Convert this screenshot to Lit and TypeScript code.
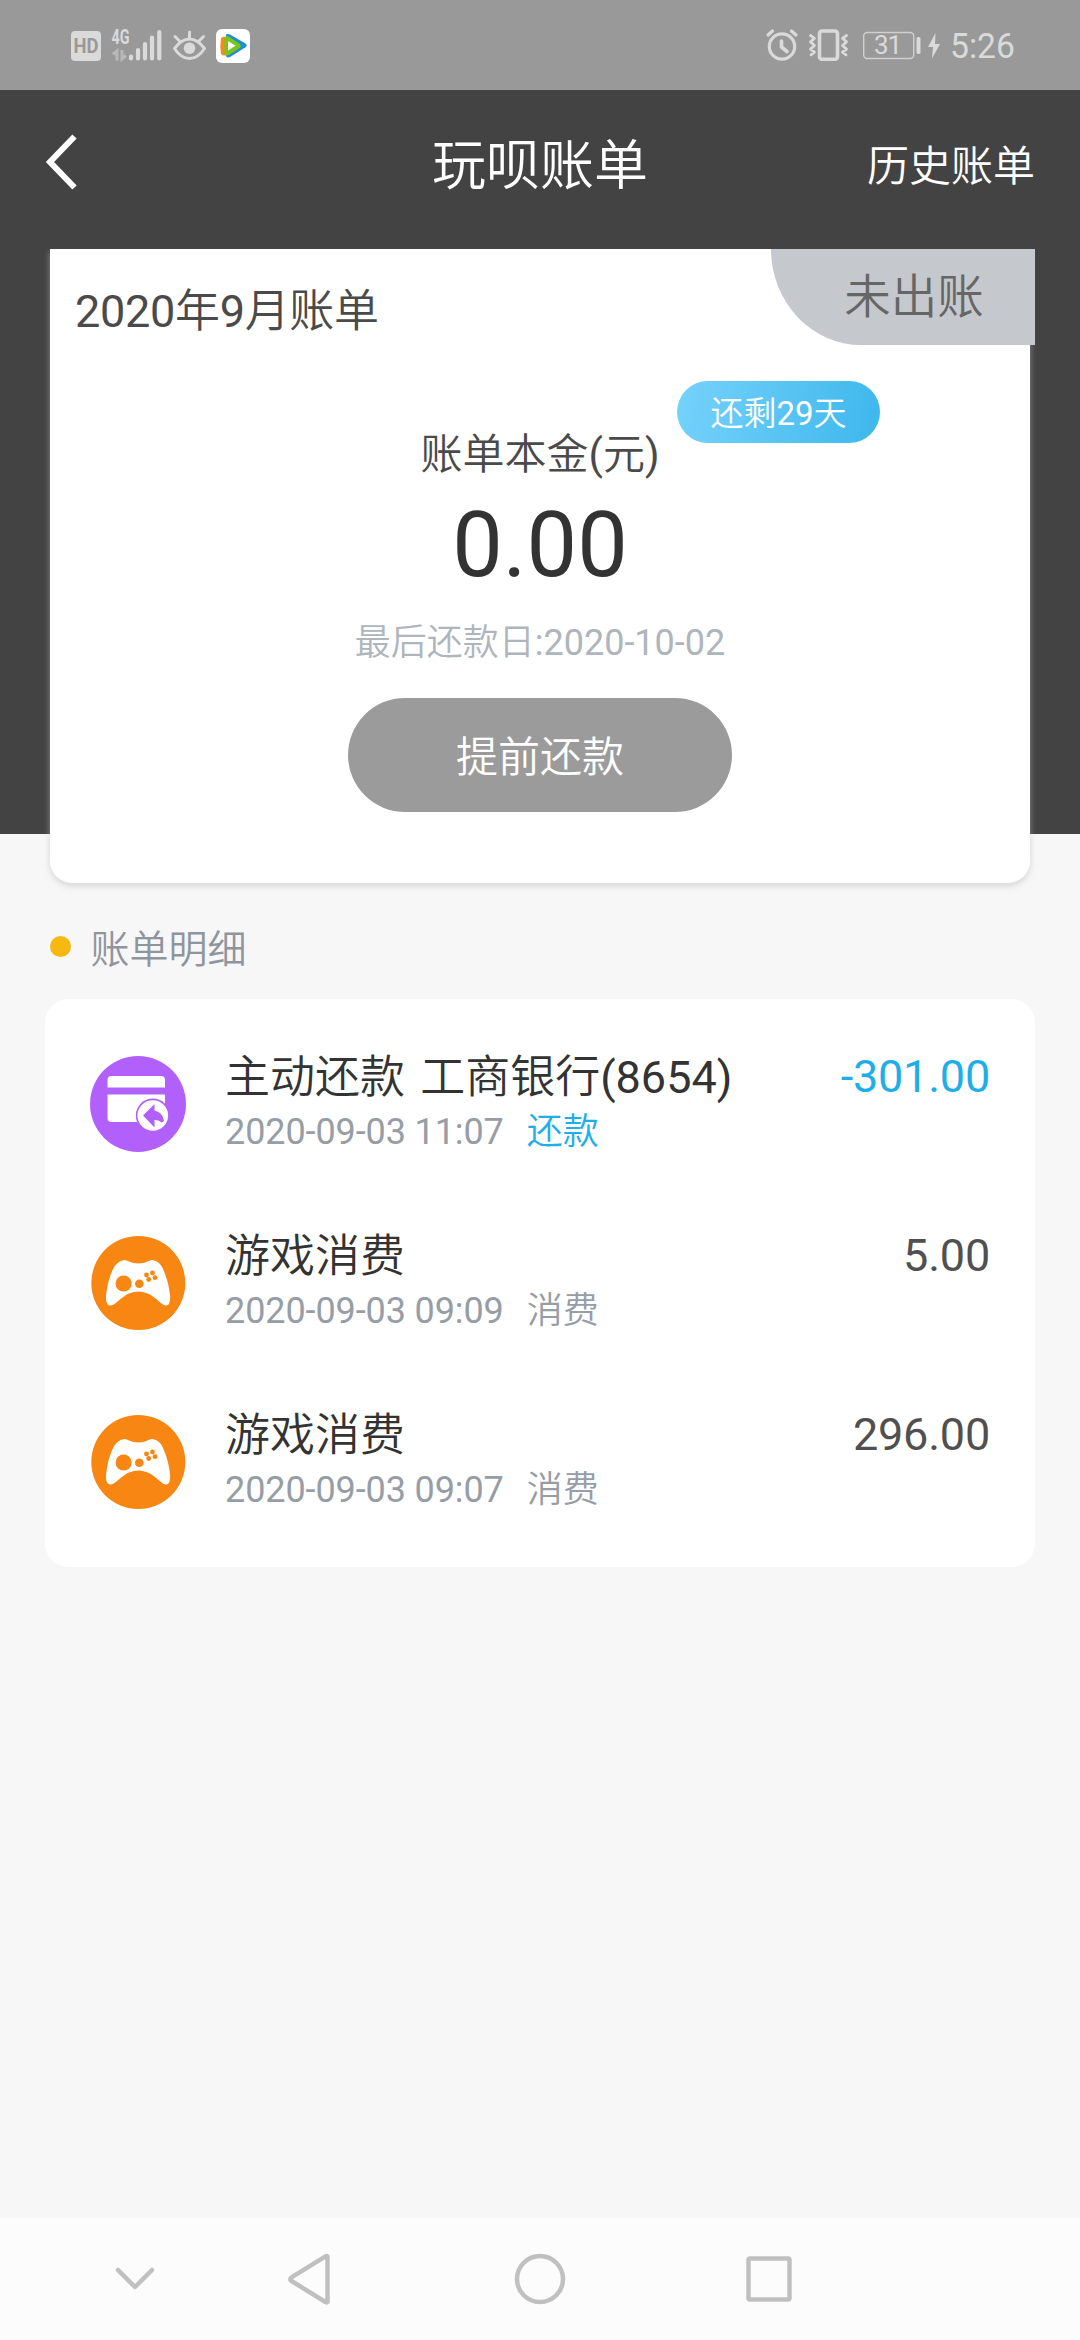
import { LitElement, html, css, svg } from "lit";
import { customElement, property } from "lit/decorators.js";
import { classMap } from "lit/directives/class-map.js";

interface Entry {
  kind: "repay" | "game";
  title: string;
  time: string;
  tag: string;
  amount: string;
}

const ENTRIES: Entry[] = [
  { kind: "repay", title: "主动还款 工商银行(8654)", time: "2020-09-03 11:07", tag: "还款", amount: "-301.00" },
  { kind: "game", title: "游戏消费", time: "2020-09-03 09:09", tag: "消费", amount: "5.00" },
  { kind: "game", title: "游戏消费", time: "2020-09-03 09:07", tag: "消费", amount: "296.00" },
];

@customElement("status-bar")
class StatusBar extends LitElement {
  static styles = css`
    :host {
      display: flex;
      justify-content: space-between;
      height: 90px;
      background: #999999;
    }
    svg {
      display: block;
    }
    .label {
      font-family: Roboto, "Liberation Sans", sans-serif;
      fill: #dadada;
    }
    .hd {
      font-family: Roboto, "Liberation Sans", sans-serif;
      font-weight: 700;
      fill: #999999;
    }
  `;

  render() {
    return html`
      <svg width="300" height="90" viewBox="0 0 300 90">
        <rect x="71" y="31" width="30" height="30" rx="4" fill="#dadada" />
        <text class="hd" x="86" y="53" font-size="20" text-anchor="middle" textLength="25" lengthAdjust="spacingAndGlyphs">HD</text>
        <text class="label" x="111.5" y="43.5" font-size="19.5" font-weight="700" textLength="18" lengthAdjust="spacingAndGlyphs">4G</text>
        <g fill="none" stroke="#b9b9b9" stroke-width="3">
          <path d="M113 54.5l4-3.5v9.5" />
          <path d="M122 50v9l4-3.5" />
        </g>
        <g stroke="#dadada" stroke-width="4.2" stroke-linecap="round">
          <path d="M131 56.5v2M138 50v8.5M145 44v14.5M152 37.5v21M159.3 32v26.5" />
        </g>
        <g fill="none" stroke="#dadada" stroke-width="3" stroke-linecap="round" stroke-linejoin="round">
          <path d="M174.5 48.5q7-9.5 15-9.5t15 9.5q-6.5 10-15 10t-15-10z" />
          <path d="M189.5 32v6M175 36.5l4.5 4.5M203.5 36.5l-4.5 4.5" />
        </g>
        <circle cx="189.500" cy="48.200" r="5.800" fill="#dadada" />
        <rect x="216" y="29" width="34" height="34" rx="6" fill="#fff" />
        <path d="M226 34.500q1.500-1 4 0l15.500 9q2.500 1.800 0 3.800l-15 9.500q-4 2-4.500-1z" fill="#1b8fd6" />
        <path d="M221 38q2.500-2 6-1v18q-3.500 1.500-6-1q-1.500-8 0-16z" fill="#f58a1f" />
        <path d="M224.500 38q1-2.500 4-1.500l11.500 7.500q1.800 2 0 3.800l-11.500 7.500q-3.500 1-4-2z" fill="#7ac51c" />
        <path d="M228 41l7.500 4.800-7.500 4.800z" fill="#fff" />
      </svg>
      <svg width="340" height="90" viewBox="740 0 340 90">
        <g fill="none" stroke="#dadada" stroke-width="3.2" stroke-linecap="round" stroke-linejoin="round">
          <circle cx="782" cy="46.5" r="12.7" />
          <path d="M781.5 41v6l5.5 4.5" stroke-width="3.6" />
          <path d="M768 35l4.500-4M796 35l-4.500-4" />
          <rect x="819.5" y="31" width="18" height="28.2" rx="2.5" stroke-width="3.6" />
          <path d="M810.5 35.500l4 2.800-4 3.600 4 3.600-4 3.600 4 3-3.500 2.700M846.500 35.500l-4 2.800 4 3.600-4 3.600 4 3.600-4 3 3.500 2.700" stroke-width="2.800" />
        </g>
        <rect x="863.700" y="32.500" width="50" height="26" rx="3.500" fill="none" stroke="#d0d0d0" stroke-width="1.400" />
        <text class="label" x="888" y="54" font-size="26" text-anchor="middle" textLength="28">31</text>
        <rect x="916.500" y="37" width="4" height="17" rx="1.800" fill="#dadada" />
        <path d="M935.500 33l-7.500 14h5l-1 11.500 8-14.500h-5z" fill="#dadada" />
        <text class="label" x="950" y="58" font-size="35.5" textLength="65" lengthAdjust="spacingAndGlyphs">5:26</text>
      </svg>
    `;
  }
}

@customElement("bill-summary")
class BillSummary extends LitElement {
  static styles = css`
    :host {
      display: block;
      padding: 0 50px;
      background: linear-gradient(#434343 585px, transparent 585px);
    }
    .card {
      position: relative;
      display: flex;
      flex-direction: column;
      align-items: center;
      box-sizing: border-box;
      height: 634px;
      padding-top: 33px;
      background: #fff;
      border-radius: 0 0 22px 22px;
      box-shadow: 0 3px 6px rgba(190, 190, 190, 0.6);
      clip-path: inset(0 -8px -20px -8px);
    }
    .month {
      align-self: flex-start;
      padding-left: 25px;
      font-size: 45px;
      line-height: 60px;
      letter-spacing: -0.3px;
      color: #4a4a4a;
    }
    .ribbon {
      position: absolute;
      top: 0;
      right: -5px;
      box-sizing: border-box;
      width: 264px;
      height: 96px;
      padding-left: 22px;
      background: #c5c8cd;
      border-bottom-left-radius: 90px 96px;
      color: #666;
      font-size: 46.5px;
      line-height: 96px;
      text-align: center;
    }
    .remaining {
      position: absolute;
      top: 132px;
      left: 627px;
      width: 203px;
      height: 62px;
      border-radius: 31px;
      background: linear-gradient(100deg, #76d2fb, #3db7ec);
      color: #fff;
      font-size: 33px;
      line-height: 66px;
      text-align: center;
    }
    .caption {
      margin-top: 83px;
      font-size: 42px;
      line-height: 60px;
      color: #4a4a4a;
    }
    .total {
      margin-top: 11px;
      font-size: 90px;
      line-height: 100px;
      color: #333;
    }
    .due {
      margin-top: 23px;
      font-size: 36px;
      line-height: 48px;
      color: #afb5bd;
    }
    .pay {
      width: 384px;
      height: 114px;
      margin-top: 31px;
      padding: 0;
      border: 0;
      border-radius: 57px;
      background: #9b9b9b;
      color: #fff;
      font: inherit;
      font-size: 42px;
      line-height: 120px;
    }
  `;

  render() {
    return html`
      <section class="card">
        <div class="month">2020年9月账单</div>
        <div class="ribbon">未出账</div>
        <div class="remaining">还剩29天</div>
        <div class="caption">账单本金(元)</div>
        <div class="total">0.00</div>
        <div class="due">最后还款日:2020-10-02</div>
        <button class="pay">提前还款</button>
      </section>
    `;
  }
}

const repayIcon = svg`
  <circle cx="48" cy="48" r="48" fill="#b260fc" />
  <path d="M17.5 31.5v-7.5q0-4 4-4h49.500q4 0 4 4v7.500z" fill="#fff" />
  <path d="M17.5 38.5h57.5v23.500q0 4-4 4h-49.500q-4 0-4-4z" fill="#fff" />
  <circle cx="62.8" cy="59.5" r="17" fill="#b260fc" />
  <circle cx="62.8" cy="59.5" r="15.3" fill="#fff" />
  <path d="M53 59.5l11.5-11.5v6.500q8 1.500 9.500 10.500l-2.500 1.500q-2.500-3-7-2.500v7.500z" fill="#b260fc" />
`;

const gameIcon = svg`
  <circle cx="48.3" cy="48" r="47" fill="#f88613" />
  <path d="M34 25q2-.5 5 1.500q4 2 9.300 2t9.300-2q3-2 5-1.500q7 1.500 10 8q6 13 7.500 28q.5 9.500-4 9.500q-2.500 0-6.500-3.500q-8-7.500-12-8.500q-5-2-9.300-2t-9.300 2q-4 1.500-12 8.500q-4 3.500-7 3.500q-4.500-.5-4-9.500q1.500-16 7.500-28q3.500-6.500 10.500-8z" fill="#fff" />
  <g fill="#f88613">
    <circle cx="33.6" cy="48.5" r="8" />
    <circle cx="49.3" cy="48.7" r="4.3" />
    <circle cx="56.5" cy="40" r="2.4" />
    <circle cx="62.5" cy="38" r="2.4" />
    <circle cx="58.7" cy="44.5" r="2.4" />
    <circle cx="65" cy="42.7" r="2.4" />
  </g>
`;

@customElement("bill-entry")
class BillEntry extends LitElement {
  @property({ attribute: false }) entry!: Entry;

  static styles = css`
    :host {
      display: flex;
      align-items: flex-start;
      box-sizing: border-box;
      height: 179px;
      padding: 32px 45px 0;
    }
    .icon {
      flex: none;
      width: 96px;
      height: 96px;
      margin-top: 9.5px;
    }
    .info {
      flex: 1;
      margin-left: 39px;
    }
    .title {
      padding-top: 1px;
      font-size: 45px;
      line-height: 60px;
      word-spacing: 4px;
      color: #333;
      white-space: nowrap;
    }
    .meta {
      display: flex;
      gap: 23px;
      font-size: 36px;
      line-height: 48px;
      color: #979da6;
    }
    .time {
      letter-spacing: -0.1px;
    }
    .amount {
      font-size: 45px;
      line-height: 60px;
      letter-spacing: -0.2px;
      color: #505050;
    }
    .blue {
      color: #1eaee8;
    }
  `;

  render() {
    const e = this.entry;
    const blue = e.kind === "repay";
    return html`
      <svg class="icon" viewBox="0 0 96 96">${blue ? repayIcon : gameIcon}</svg>
      <div class="info">
        <div class="title">${e.title}</div>
        <div class="meta"><span class="time">${e.time}</span><span class=${classMap({ blue })}>${e.tag}</span></div>
      </div>
      <div class=${classMap({ amount: true, blue })}>${e.amount}</div>
    `;
  }
}

@customElement("app-root")
class AppRoot extends LitElement {
  static styles = css`
    :host {
      display: flex;
      flex-direction: column;
      width: 1080px;
      height: 2340px;
      overflow: hidden;
      background: #f7f7f7;
      font-family: Roboto, "Noto Sans CJK SC DemiLight", "Noto Sans CJK SC Light", "Noto Sans CJK SC", sans-serif;
      font-weight: 400;
    }
    .header {
      display: grid;
      grid-template-columns: 1fr auto 1fr;
      align-items: center;
      box-sizing: border-box;
      height: 159px;
      padding: 0 45px 6px;
      background: #434343;
      color: #fff;
    }
    .back {
      display: block;
      width: 33px;
      height: 56px;
      margin-bottom: 9px;
    }
    .heading {
      font-size: 54px;
      line-height: 80px;
    }
    .history {
      justify-self: end;
      font-size: 42px;
      line-height: 60px;
    }
    .section {
      display: flex;
      align-items: center;
      gap: 20px;
      margin: 37px 0 0 49.5px;
      font-size: 39px;
      line-height: 60px;
      color: #8f959d;
    }
    .dot {
      width: 21px;
      height: 21px;
      margin-bottom: 8px;
      border-radius: 50%;
      background: #f5b912;
    }
    .list {
      box-sizing: border-box;
      height: 568px;
      margin: 19px 45px 0;
      padding-top: 15.5px;
      border-radius: 24px;
      background: #fff;
    }
    .nav {
      height: 122px;
      margin-top: auto;
      background: #fcfcfc;
    }
  `;

  render() {
    return html`
      <status-bar></status-bar>
      <header class="header">
        <svg class="back" viewBox="0 0 33 56" fill="none" stroke="#fff" stroke-width="6">
          <path d="M29.5 2.5L5 28l24.5 25.5" />
        </svg>
        <div class="heading">玩呗账单</div>
        <div class="history">历史账单</div>
      </header>
      <bill-summary></bill-summary>
      <div class="section"><span class="dot"></span><span>账单明细</span></div>
      <main class="list">${ENTRIES.map((e) => html`<bill-entry .entry=${e}></bill-entry>`)}</main>
      <svg class="nav" width="1080" height="122" viewBox="0 2218 1080 122">
        <g fill="none" stroke="#c0c0c0" stroke-width="4.5" stroke-linecap="round" stroke-linejoin="round">
          <path d="M118 2270l17 17 17-17" />
          <path d="M327.5 2256.5v45.500q-.5 1-2 0l-34-21q-2.500-1.800 0-3.600l34-21q1.500-1 2 .1z" />
          <circle cx="540" cy="2279" r="23" />
          <rect x="748.5" y="2258.5" width="41" height="41" rx="1.5" />
        </g>
      </svg>
    `;
  }
}
